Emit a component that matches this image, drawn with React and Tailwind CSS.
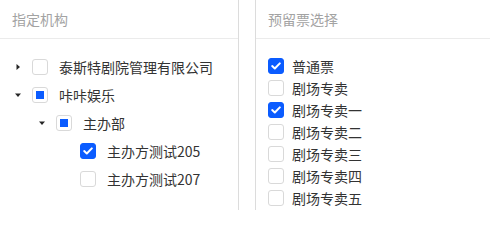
import React from "react";

const blue = "bg-[#0b5cff] border-[#0b5cff]";

function Check({ checked, half }) {
  return (
    <span
      className={`flex h-4 w-4 shrink-0 items-center justify-center rounded-[3px] border ${
        checked ? blue : "border-[#d9d9d9] bg-white"
      }`}
    >
      {checked && (
        <svg width="10" height="8" viewBox="0 0 10 8" fill="none">
          <path d="M1.2 4.1 3.8 6.5 8.8 1.4" stroke="white" strokeWidth="2" strokeLinecap="round" strokeLinejoin="round" />
        </svg>
      )}
      {half && <span className="h-2 w-2 bg-[#0b5cff]" />}
    </span>
  );
}

function Caret({ open }) {
  return (
    <svg width="8" height="8" viewBox="0 0 8 8" className="text-[#262626]">
      {open ? <path d="M1 2.5h6L4 6z" fill="currentColor" /> : <path d="M2.5 1v6L6 4z" fill="currentColor" />}
    </svg>
  );
}

const tree = [
  { level: 0, label: "泰斯特剧院管理有限公司", caret: "closed" },
  { level: 0, label: "咔咔娱乐", caret: "open", half: true },
  { level: 1, label: "主办部", caret: "open", half: true },
  { level: 2, label: "主办方测试205", checked: true },
  { level: 2, label: "主办方测试207" },
];

const tickets = [
  { label: "普通票", checked: true },
  { label: "剧场专卖" },
  { label: "剧场专卖一", checked: true },
  { label: "剧场专卖二" },
  { label: "剧场专卖三" },
  { label: "剧场专卖四" },
  { label: "剧场专卖五" },
];

const indent = ["pl-[6px]", "pl-[30px]", "pl-[54px]"];

export default function App() {
  return (
    <div
      className="flex h-[210px] w-[490px] overflow-hidden bg-white text-[14px]"
      style={{ fontFamily: '"Noto Sans CJK SC", "Noto Sans", sans-serif' }}
    >
      <div className="w-[239px] shrink-0 border-r border-[#dcdcdc]">
        <div className="flex h-[39px] items-center border-b border-[#ebebeb] px-3 text-[#a3a3a3]">指定机构</div>
        <div className="pt-[14px]">
          {tree.map((n) => (
            <div key={n.label} className={`flex h-7 items-center ${indent[n.level]}`}>
              <span className="flex w-6 justify-center">{n.caret && <Caret open={n.caret === "open"} />}</span>
              <span className="ml-[2px]">
                <Check checked={n.checked} half={n.half} />
              </span>
              <span className="ml-[11px] text-[#333]">{n.label}</span>
            </div>
          ))}
        </div>
      </div>
      <div className="ml-4 flex-1 border-l border-[#dcdcdc]">
        <div className="flex h-[39px] items-center border-b border-[#ebebeb] px-3 text-[#a3a3a3]">预留票选择</div>
        <div className="pl-3 pt-4">
          {tickets.map((t) => (
            <div key={t.label} className="flex h-[22px] items-center gap-2">
              <Check checked={t.checked} />
              <span className="text-[#333]">{t.label}</span>
            </div>
          ))}
        </div>
      </div>
    </div>
  );
}
